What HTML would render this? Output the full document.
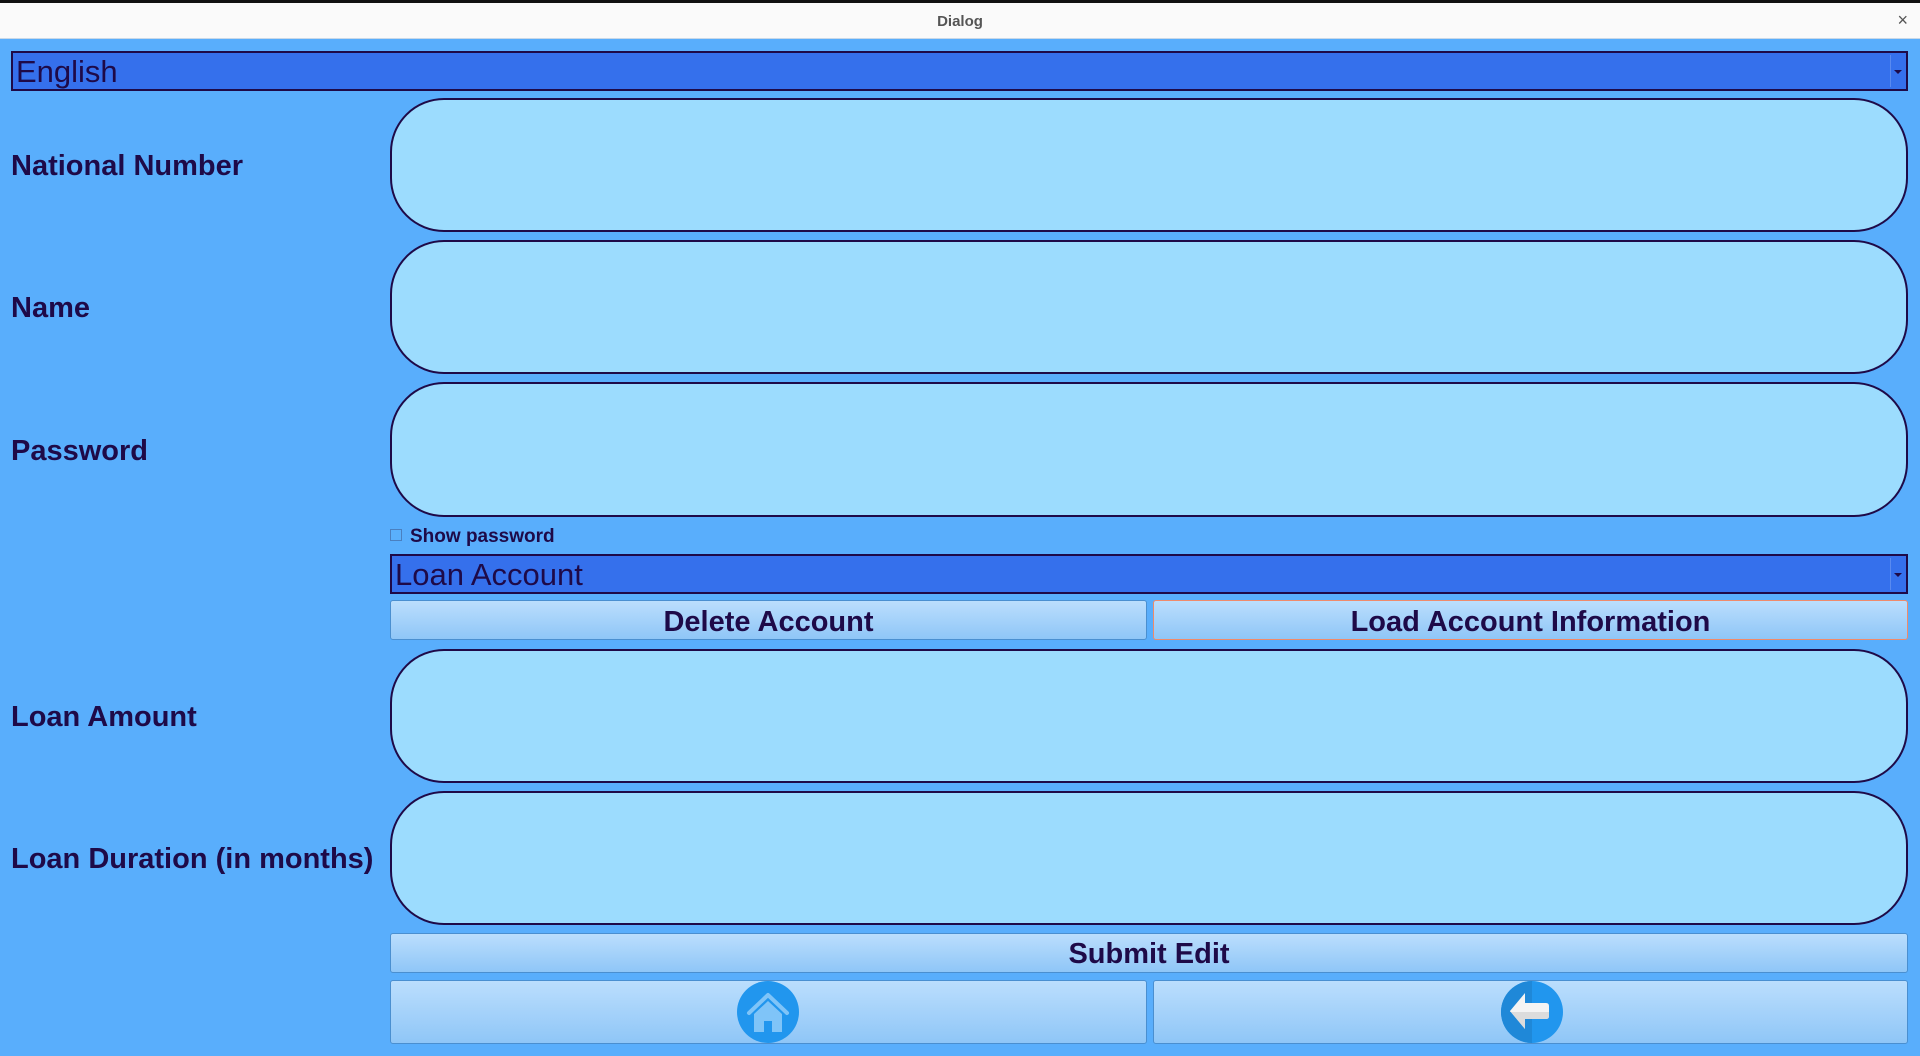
<!DOCTYPE html>
<html><head><meta charset="utf-8"><style>
*{margin:0;padding:0;box-sizing:border-box}
body{width:1920px;height:1056px;background:#59aefc;position:relative;overflow:hidden;font-family:"Liberation Sans","DejaVu Sans",sans-serif;color:#1e0a48}
.title{position:absolute;left:0;top:0;width:1920px;height:39px;background:#fafafa;border-top:3px solid #111;border-bottom:1px solid #c8d8e8}
.title span{position:absolute;left:0;width:1920px;top:10px;text-align:center;font-size:15px;font-weight:bold;color:#555}
.title .x{position:absolute;left:auto;width:auto;right:12px;top:7px;font-size:18px;font-weight:normal;color:#555}
.combo{position:absolute;background:#3570ec;border:2px solid #1e0a48;font-size:31px;padding-left:3px;line-height:38px}
.combo .arr{position:absolute;right:2px;top:2px;bottom:2px;width:14px;border-left:1px solid #5a8af0;background:#3570ec}
.combo .arr:after{content:"";position:absolute;left:3px;top:15px;border:4px solid transparent;border-top:4px solid #1e0a48}
.lbl{position:absolute;left:11px;font-size:29px;font-weight:bold}
.field{position:absolute;left:390px;width:1518px;background:#9cdcfe;border:2px solid #1e0a48;border-radius:54px}
.btn{position:absolute;background:linear-gradient(#bbdefd,#8fc6f7);border:1px solid #4a8fd0;border-radius:3px;font-size:29px;font-weight:bold;text-align:center}
</style></head><body>
<div class="title"><span>Dialog</span><span class="x">×</span></div>
<div class="combo" style="left:11px;top:51px;width:1897px;height:40px">English<div class="arr"></div></div>

<div class="field" style="top:98px;height:134px"></div>
<div class="lbl" style="top:150px">National Number</div>
<div class="field" style="top:240px;height:134px"></div>
<div class="lbl" style="top:292px">Name</div>
<div class="field" style="top:382px;height:135px"></div>
<div class="lbl" style="top:435px">Password</div>

<div style="position:absolute;left:390px;top:529px;width:12px;height:12px;border:1px solid #4a80c0;background:#5ab0fc"></div>
<div style="position:absolute;left:410px;top:526px;font-size:19px;font-weight:bold">Show password</div>

<div class="combo" style="left:390px;top:554px;width:1518px;height:40px">Loan Account<div class="arr"></div></div>

<div class="btn" style="left:390px;top:600px;width:757px;height:40px;line-height:42px">Delete Account</div>
<div class="btn" style="left:1153px;top:600px;width:755px;height:40px;line-height:42px;border-color:#f08a6a">Load Account Information</div>

<div class="field" style="top:649px;height:134px"></div>
<div class="lbl" style="top:701px">Loan Amount</div>
<div class="field" style="top:791px;height:134px"></div>
<div class="lbl" style="top:843px">Loan Duration (in months)</div>

<div class="btn" style="left:390px;top:933px;width:1518px;height:40px;line-height:41px">Submit Edit</div>
<div class="btn" style="left:390px;top:980px;width:757px;height:64px"></div>
<div class="btn" style="left:1153px;top:980px;width:755px;height:64px"></div>

<svg style="position:absolute;left:736px;top:980px" width="64" height="64" viewBox="0 0 64 64">
<circle cx="32" cy="32" r="31" fill="#2196ee"/>
<path d="M13 33 L32 15 L51 33" fill="none" stroke="#7fc4f8" stroke-width="4" stroke-linecap="round" stroke-linejoin="round"/>
<path d="M18 34 L32 21 L46 34 V52 H36 V41 H28 V52 H18 Z" fill="#7fc4f8"/>
</svg>
<svg style="position:absolute;left:1500px;top:980px" width="64" height="64" viewBox="0 0 64 64">
<circle cx="32" cy="32" r="31" fill="#2196ee"/>
<path d="M32 1 A31 31 0 0 0 32 63 Z" fill="#1f88d8"/>
<path d="M10 31 L25 13 V23 H46 Q49 23 49 26 V36 Q49 39 46 39 H25 V49 Z" fill="#f4f4f4"/>
<path d="M10 31 L25 49 V39 H46 Q49 39 49 36 V32 H10 Z" fill="#dcdcdc"/>
</svg>
</body></html>
